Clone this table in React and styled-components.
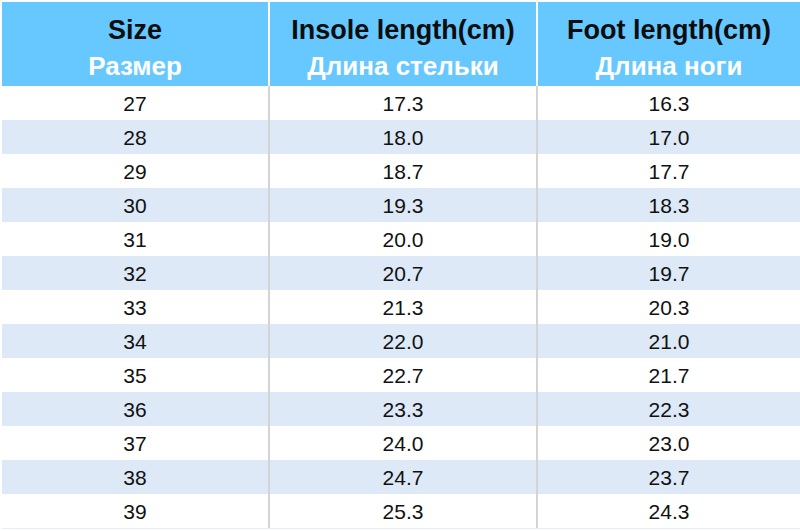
import React from 'react'
import styled, { createGlobalStyle } from 'styled-components'

const GlobalStyle = createGlobalStyle`
  html, body {
    margin: 0;
    padding: 0;
    background: #ffffff;
  }
`;

const rows = [
  ['27', '17.3', '16.3'],
  ['28', '18.0', '17.0'],
  ['29', '18.7', '17.7'],
  ['30', '19.3', '18.3'],
  ['31', '20.0', '19.0'],
  ['32', '20.7', '19.7'],
  ['33', '21.3', '20.3'],
  ['34', '22.0', '21.0'],
  ['35', '22.7', '21.7'],
  ['36', '23.3', '22.3'],
  ['37', '24.0', '23.0'],
  ['38', '24.7', '23.7'],
  ['39', '25.3', '24.3'],
];

const headers = [
  ['Size', 'Размер'],
  ['Insole length(cm)', 'Длина стельки'],
  ['Foot length(cm)', 'Длина ноги'],
];

//css section
const Page = styled.div`
  width: 800px;
  height: 531px;
  padding: 2px 0 0 2px;
  box-sizing: border-box;
  font-family: "Liberation Sans", Arial, sans-serif;
`;

const Table = styled.div`
  display: grid;
  grid-template-columns: 266px 268px 264px;
  border-bottom: 1px solid #e6eef6;
`;

const HeadCell = styled.div`
  height: 84px;
  box-sizing: border-box;
  padding-top: 7px;
  background: #66c8ff;
  display: flex;
  flex-direction: column;
  align-items: center;
  justify-content: center;
  border-left: ${p => (p.first ? 'none' : '2px solid #ffffff')};
  font-weight: bold;
`;

const HeadEn = styled.div`
  font-size: 27px;
  line-height: 36px;
  color: #0d0d0d;
`;

const HeadRu = styled.div`
  font-size: 26px;
  line-height: 36px;
  color: #ffffff;
`;

const Cell = styled.div`
  height: 34px;
  display: flex;
  align-items: center;
  justify-content: center;
  padding-top: 1px;
  box-sizing: border-box;
  font-size: 21px;
  color: #111111;
  background: ${p => (p.alt ? '#dde9f6' : '#ffffff')};
  border-left: ${p => (p.first ? 'none' : '2px solid #d4d4d4')};
`;

const App = () => {
  return (
    <Page>
      <GlobalStyle />
      <Table>
        {headers.map((h, i) => (
          <HeadCell key={h[0]} first={i === 0}>
            <HeadEn>{h[0]}</HeadEn>
            <HeadRu>{h[1]}</HeadRu>
          </HeadCell>
        ))}
        {rows.map((r, ri) =>
          r.map((v, ci) => (
            <Cell key={ri + '-' + ci} alt={ri % 2 === 1} first={ci === 0}>
              {v}
            </Cell>
          ))
        )}
      </Table>
    </Page>
  );
};

export default App;
